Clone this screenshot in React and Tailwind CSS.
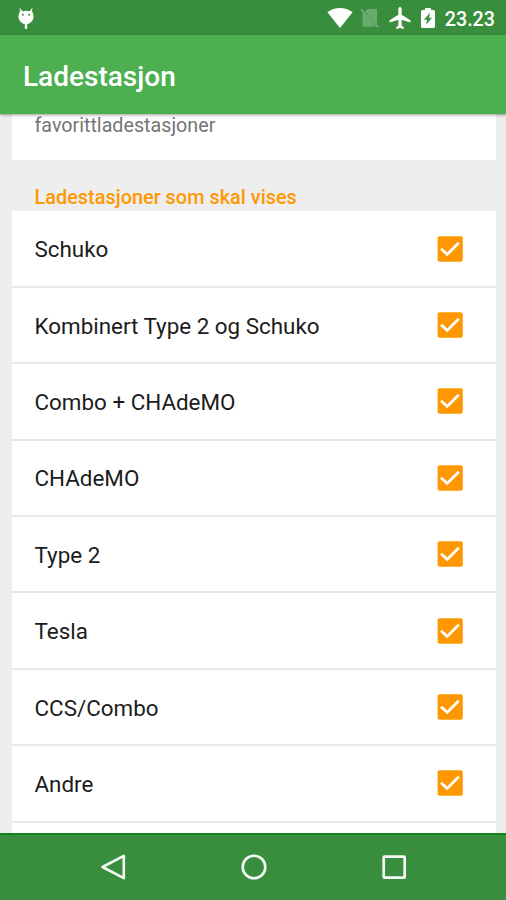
const stations = [
  "Schuko",
  "Kombinert Type 2 og Schuko",
  "Combo + CHAdeMO",
  "CHAdeMO",
  "Type 2",
  "Tesla",
  "CCS/Combo",
  "Andre",
];

const StatusBar = () => (
  <div className="flex h-[35px] shrink-0 items-center justify-between bg-[#388e3c] pl-[17px] pr-[11px] text-white">
    <svg width="18" height="22" viewBox="0 0 18 22" className="mt-0.5">
      <path
        d="M3 1l2.2 3M15 1l-2.2 3"
        stroke="currentColor"
        strokeWidth="1.2"
        strokeLinecap="round"
      />
      <path
        d="M3.4 2.6Q5 3.4 6 3.2Q9 2.4 12 3.2Q13 3.4 14.6 2.6Q16.6 5.5 16.6 8.5C16.6 12.5 13.5 15.6 10.2 16V20Q10.2 21 9 21Q7.8 21 7.8 20V16C4.5 15.6 1.4 12.5 1.4 8.5Q1.4 5.5 3.4 2.6Z"
        fill="currentColor"
      />
      <circle cx="5.9" cy="6.8" r="1" fill="#388e3c" />
      <circle cx="12.1" cy="6.8" r="1" fill="#388e3c" />
    </svg>
    <div className="flex items-center">
      <svg width="26" height="20" viewBox="0 0 26 20" className="mr-[7px]">
        <path d="M13 20L.4 4.3Q6 0 13 0T25.6 4.3Z" fill="currentColor" />
      </svg>
      <svg width="20" height="20" viewBox="0 0 20 20" className="mr-[9px]">
        <path
          d="M7.5 1H17V16.2L4.8 3.6ZM2.5 4.2L16 18.8H2.5Z"
          fill="#6bab6e"
        />
        <path d="M1 1.5L18.2 19" stroke="#81b784" strokeWidth="1.2" />
      </svg>
      <svg width="22" height="22" viewBox="2 2 19 20" className="mr-[9px]">
        <path
          d="M21 16v-2l-8-5V3.5c0-.83-.67-1.5-1.5-1.5S10 2.67 10 3.5V9l-8 5v2l8-2.5V19l-2 1.5V22l3.5-1 3.5 1v-1.5L13 19v-5.5l8 2.5z"
          fill="currentColor"
        />
      </svg>
      <svg width="16" height="22" viewBox="0 0 16 22" className="mr-[9px]">
        <path
          d="M5 1H11V3H13.5Q15 3 15 4.5V19.5Q15 21 13.5 21H2.5Q1 21 1 19.5V4.5Q1 3 2.5 3H5Z"
          fill="currentColor"
        />
        <path d="M10 5.5L4 12.8H7.2L6 18L12 10.8H9Z" fill="#388e3c" />
      </svg>
      <span className="mt-[5px] text-[19.7px] font-medium leading-6">23.23</span>
    </div>
  </div>
);

const Checkbox = () => (
  <svg width="26" height="26" viewBox="0 0 26 26">
    <rect x=".6" y=".3" width="25.2" height="25.4" rx="2" fill="#ff9800" />
    <path
      d="M4 12.8L10.2 18.4L21.8 6.8"
      fill="none"
      stroke="#fff"
      strokeWidth="2.8"
    />
  </svg>
);

const NavigationBar = () => (
  <div className="flex h-[67px] shrink-0 items-center justify-center gap-28 border-t-2 border-[#16821c] bg-[#388e3c] pb-[1.5px] pl-[1.5px]">
    <svg width="28" height="28" viewBox="0 0 28 28" fill="none">
      <path
        d="M23.8 2.8V25.2L2.5 14Z"
        stroke="#f5faf5"
        strokeWidth="2.6"
        strokeLinejoin="round"
      />
    </svg>
    <svg width="28" height="28" viewBox="0 0 28 28" fill="none">
      <circle cx="14" cy="14" r="11.3" stroke="#f5faf5" strokeWidth="2.6" />
    </svg>
    <svg width="28" height="28" viewBox="0 0 28 28" fill="none">
      <rect
        x="3.7"
        y="3.7"
        width="21"
        height="21"
        rx="1"
        stroke="#f5faf5"
        strokeWidth="2.7"
      />
    </svg>
  </div>
);

const App = () => {
  return (
    <div className="flex h-[900px] w-[506px] flex-col overflow-hidden bg-[#eeeeee] font-['Roboto',sans-serif]">
      <StatusBar />
      <header className="z-10 flex h-[79px] shrink-0 items-center bg-[#4caf50] pl-[23px] pt-1 shadow-[0_1px_3px_rgba(0,0,0,0.4)]">
        <h1 className="text-[28px] font-medium leading-8 text-white">Ladestasjon</h1>
      </header>

      <main className="min-h-0 flex-1 overflow-hidden pl-[11.5px] pr-[10.5px]">
        <div className="h-[46px] bg-white pl-[23px]">
          <p className="text-[19.7px] leading-[23px] text-[#757575]">
            favorittladestasjoner
          </p>
        </div>
        <h2 className="h-[51.4px] pl-[23px] pt-[26px] text-[19.9px] font-medium leading-[23px] text-[#ff9800]">
          Ladestasjoner som skal vises
        </h2>
        <ul>
          {stations.map((station) => (
            <li
              key={station}
              className="flex h-[76.4px] items-center justify-between border-b-2 border-[#e9e9e9] bg-white pl-[23px] pr-[32.5px] text-[22.4px] text-[#1c1c1c]"
            >
              <span className="pt-[3px]">{station}</span>
              <Checkbox />
            </li>
          ))}
          <li className="h-4 bg-white" />
        </ul>
      </main>

      <NavigationBar />
    </div>
  );
};

export default App;
